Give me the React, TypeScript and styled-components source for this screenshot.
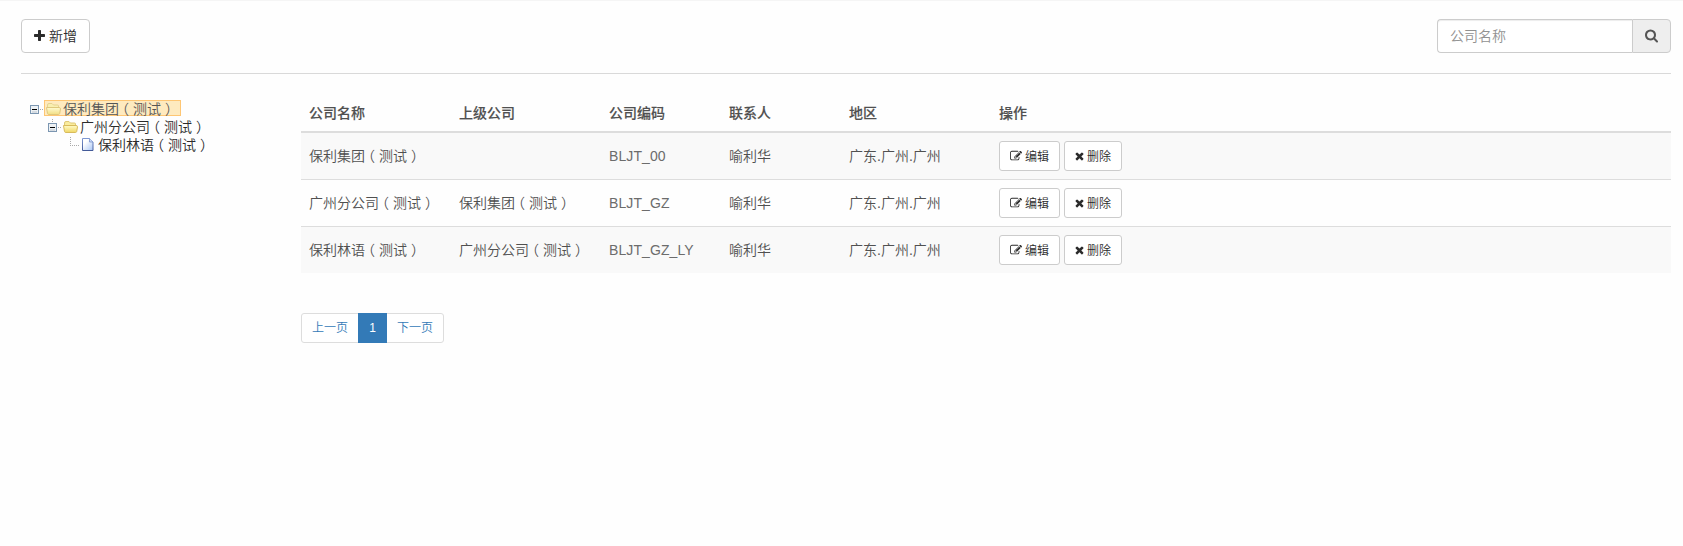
import React from 'react';
import styled, { createGlobalStyle, css } from 'styled-components';

const GlobalStyle = createGlobalStyle`
  * { box-sizing: border-box; }
  body {
    margin: 0;
    background: #fefefe;
    color: #505050;
    font: 350 14px/20px "Liberation Sans", "Noto Sans CJK SC", sans-serif;
  }
  button, input { font-family: inherit; font-weight: inherit; }
`;

const Page = styled.div`
  min-height: 546px;
  border-top: 1px solid #f5f5f5;
  padding: 18px 12px 0 21px;
`;

const Toolbar = styled.header`
  display: flex;
  justify-content: space-between;
  height: 55px;
  border-bottom: 1px solid #d9d9d9;
`;

const Button = styled.button<{ $small?: boolean }>`
  display: inline-flex;
  align-items: center;
  gap: ${p => (p.$small ? 3 : 4)}px;
  height: ${p => (p.$small ? 30 : 34)}px;
  padding: ${p => (p.$small ? '0 10px' : '0 12px')};
  border: 1px solid #ccc;
  border-radius: ${p => (p.$small ? 3 : 4)}px;
  background: #fff;
  color: #2b2b2b;
  font-size: ${p => (p.$small ? 12 : 14)}px;
  line-height: ${p => (p.$small ? 18 : 20)}px;
  white-space: nowrap;
`;

const SearchGroup = styled.div`
  display: flex;
  width: 234px;
  height: 34px;
`;

const SearchInput = styled.input`
  width: 195px;
  padding: 6px 12px;
  border: 1px solid #ccc;
  border-right: 0;
  border-radius: 4px 0 0 4px;
  background: #fff;
  box-shadow: inset 0 1px 1px rgba(0, 0, 0, 0.075);
  font-size: 14px;
  outline: none;
  &::placeholder { color: #919191; opacity: 1; }
`;

const SearchAddon = styled.span`
  display: flex;
  flex: 1;
  align-items: center;
  justify-content: center;
  border: 1px solid #ccc;
  border-radius: 0 4px 4px 0;
  background: #eee;
  color: #555;
`;

const Glyph = styled.svg`
  display: block;
  flex: none;
  fill: currentColor;
`;

const Body = styled.main`
  display: flex;
`;

const Tree = styled.nav`
  width: 280px;
  padding: 26px 0 0 5px;
  color: #2b2b2b;
`;

const TreeRow = styled.div<{ $level: number }>`
  display: flex;
  align-items: flex-start;
  height: 18px;
  padding-left: ${p => p.$level * 18}px;
`;

const TreeLink = styled.a<{ $selected?: boolean }>`
  display: flex;
  align-items: flex-start;
  gap: 2px;
  height: 18px;
  line-height: 18px;
  white-space: nowrap;
  ${p => p.$selected && css`
    width: 137px;
    height: 16px;
    line-height: 16px;
    border: 1px solid #ffb951;
    background: #ffe6b0;
    opacity: 0.8;
    & > svg { margin-top: -1px; }
  `}
`;

const Content = styled.section`
  flex: 1;
  padding-top: 20px;
`;

const Table = styled.table`
  width: 100%;
  table-layout: fixed;
  border-spacing: 0;
`;

const HeadCell = styled.th<{ $width?: number }>`
  width: ${p => (p.$width ? `${p.$width}px` : 'auto')};
  height: 39px;
  padding: 1px 8px 0;
  border-bottom: 2px solid #ddd;
  text-align: left;
  font-weight: 500;
  -webkit-text-stroke: 0.15px #505050;
`;

const Row = styled.tr`
  &:nth-child(odd) { background: #f9f9f9; }
  & + & > td { border-top: 1px solid #ddd; height: 47px; }
`;

const Cell = styled.td`
  height: 46px;
  padding: 0 8px;
  white-space: nowrap;
`;

const Code = styled.span`
  color: #6c6c6c;
  letter-spacing: 0.1px;
`;

const Actions = styled.div`
  display: flex;
  gap: 4px;
`;

const Paren = styled.span<{ $open?: boolean }>`
  display: inline-block;
  width: 14px;
  padding-left: ${p => (p.$open ? 3 : 4)}px;
  font-feature-settings: "halt";
`;

const Pager = styled.nav`
  display: flex;
  width: 143px;
  height: 30px;
  margin-top: 40px;
  border: 1px solid #ddd;
  border-radius: 3px;
  background: #fff;
`;

const PageLink = styled.a<{ $active?: boolean }>`
  display: flex;
  flex: ${p => (p.$active ? '0 0 29px' : 1)};
  align-items: center;
  justify-content: center;
  margin: ${p => (p.$active ? '-1px 0' : 0)};
  background: ${p => (p.$active ? '#337ab7' : 'transparent')};
  color: ${p => (p.$active ? '#fff' : '#337ab7')};
  font-size: 12px;
  line-height: 18px;
`;

const PLUS = 'M1600 736v192q0 40-28 68t-68 28h-416v416q0 40-28 68t-68 28h-192q-40 0-68-28t-28-68v-416h-416q-40 0-68-28t-28-68v-192q0-40 28-68t68-28h416v-416q0-40 28-68t68-28h192q40 0 68 28t28 68v416h416q40 0 68 28t28 68z';
const TIMES = 'M1490 1322q0 40-28 68l-136 136q-28 28-68 28t-68-28l-294-294-294 294q-28 28-68 28t-68-28l-136-136q-28-28-28-68t28-68l294-294-294-294q-28-28-28-68t28-68l136-136q28-28 68-28t68 28l294 294 294-294q28-28 68-28t68 28l136 136q28 28 28 68t-28 68l-294 294 294 294q28 28 28 68z';
const SEARCH = 'M1216 832q0-185-131.5-316.5t-316.5-131.5-316.5 131.5-131.5 316.5 131.5 316.5 316.5 131.5 316.5-131.5 131.5-316.5zm512 832q0 52-38 90t-90 38q-54 0-90-38l-343-342q-179 124-399 124-143 0-273.5-55.5t-225-150-150-225-55.5-273.5 55.5-273.5 150-225 225-150 273.5-55.5 273.5 55.5 225 150 150 225 55.5 273.5q0 220-124 399l343 343q37 37 37 90z';
const EDIT = 'M888 1184l116-116-152-152-116 116v56h96v96h56zm440-720q-16-16-33 1l-350 350q-17 17-1 33t33-1l350-350q17-17 1-33zm80 594v190q0 119-84.5 203.5t-203.5 84.5h-832q-119 0-203.5-84.5t-84.5-203.5v-832q0-119 84.5-203.5t203.5-84.5h832q63 0 117 25 15 7 18 23 3 17-9 29l-49 49q-14 14-32 8-23-6-45-6h-832q-66 0-113 47t-47 113v832q0 66 47 113t113 47h832q66 0 113-47t47-113v-126q0-13 9-22l64-64q15-15 35-7t20 29zm-96-738l288 288-672 672h-288v-288zm444 132l-92 92-288-288 92-92q28-28 68-28t68 28l152 152q28 28 28 68t-28 68z';

const PlusIcon = () => <Glyph width="11" height="14" viewBox="192 0 1408 1792"><path d={PLUS} /></Glyph>;
const TimesIcon = () => <Glyph width="9" height="12" viewBox="224 0 1344 1792"><path d={TIMES} /></Glyph>;
const SearchIcon = () => <Glyph width="13" height="14" viewBox="64 64 1664 1792"><path d={SEARCH} /></Glyph>;
const EditIcon = () => <Glyph width="12" height="12" viewBox="0 0 1792 1792"><path d={EDIT} /></Glyph>;

const ButtonText = styled.span`
  padding-top: 1px;
`;

type SwitchKind = 'root' | 'branch' | 'leaf';

const TreeSwitch = ({ kind }: { kind: SwitchKind }) => (
  <Glyph width="18" height="18" viewBox="0 0 18 18" shapeRendering="crispEdges">
    {kind !== 'root' && (
      <path d={kind === 'leaf' ? 'M8.5 1v9' : 'M8.5 1v4'} stroke="#aaa" strokeDasharray="1 1" />
    )}
    <path d={kind === 'leaf' ? 'M8 9.5h10' : 'M14 9.5h4'} stroke="#aaa" strokeDasharray="1 1" />
    {kind !== 'leaf' && (
      <>
        <rect x="4.5" y="5.5" width="8" height="8" fill="#edf1f4" stroke="#7b96b1" />
        <path d="M6 11h5v2h-5z" fill="#d5dbe1" />
        <path d="M6 9.5h5" stroke="#000" />
      </>
    )}
  </Glyph>
);

const FolderIcon = () => (
  <Glyph width="16" height="16" viewBox="0 0 16 16">
    <defs>
      <linearGradient id="folderFront" x1="0" y1="0" x2="0" y2="1">
        <stop offset="0" stopColor="#fffbc8" />
        <stop offset="1" stopColor="#f0d765" />
      </linearGradient>
    </defs>
    <path d="M2.500 9V5q0-1.500 1.500-1.500h3L8.500 5h4q1 0 1 1v3" fill="#f9ec9d" stroke="#dfc877" />
    <path d="M1.500 7.500h12.500q1.500 0 1.500 1.300l-.8 4.700q-.3 1-1.300 1H3.800q-1 0-1.300-1z" fill="url(#folderFront)" stroke="#d8bb5c" />
  </Glyph>
);

const PageIcon = () => (
  <Glyph width="16" height="16" viewBox="0 0 16 16">
    <defs>
      <linearGradient id="sheet" x1="0" y1="0" x2="1" y2="1">
        <stop offset="0.3" stopColor="#fff" />
        <stop offset="1" stopColor="#a9c6f5" />
      </linearGradient>
      <linearGradient id="sheetEdge" x1="0" y1="0" x2="0" y2="1">
        <stop offset="0" stopColor="#7d97d2" />
        <stop offset="1" stopColor="#435a98" />
      </linearGradient>
    </defs>
    <path d="M2.500 2.500h7l3.500 3.500v8.500h-10.500z" fill="url(#sheet)" stroke="url(#sheetEdge)" />
    <path d="M9.500 2.500v3.500h3.500" fill="#c9daf8" stroke="#6d87c4" strokeWidth=".7" />
  </Glyph>
);

const Name = ({ text }: { text: string }) => (
  <span>
    {text.split(/([（）])/).map((part, i) =>
      part === '（' || part === '）' ? <Paren key={i} $open={part === '（'}>{part}</Paren> : part,
    )}
  </span>
);

const columns = [
  { title: '公司名称', width: 150 },
  { title: '上级公司', width: 150 },
  { title: '公司编码', width: 120 },
  { title: '联系人', width: 120 },
  { title: '地区', width: 150 },
  { title: '操作' },
];

const companies = [
  { name: '保利集团（测试）', parent: '', code: 'BLJT_00' },
  { name: '广州分公司（测试）', parent: '保利集团（测试）', code: 'BLJT_GZ' },
  { name: '保利林语（测试）', parent: '广州分公司（测试）', code: 'BLJT_GZ_LY' },
];

const kinds: SwitchKind[] = ['root', 'branch', 'leaf'];

export default function App() {
  return (
    <>
      <GlobalStyle />
      <Page>
        <Toolbar>
          <Button><PlusIcon />新增</Button>
          <SearchGroup>
            <SearchInput placeholder="公司名称" />
            <SearchAddon><SearchIcon /></SearchAddon>
          </SearchGroup>
        </Toolbar>
        <Body>
          <Tree>
            {companies.map((c, level) => (
              <TreeRow key={c.code} $level={level}>
                <TreeSwitch kind={kinds[level]} />
                <TreeLink $selected={level === 0}>
                  {kinds[level] === 'leaf' ? <PageIcon /> : <FolderIcon />}
                  <Name text={c.name} />
                </TreeLink>
              </TreeRow>
            ))}
          </Tree>
          <Content>
            <Table>
              <thead>
                <tr>
                  {columns.map(c => <HeadCell key={c.title} $width={c.width}>{c.title}</HeadCell>)}
                </tr>
              </thead>
              <tbody>
                {companies.map(c => (
                  <Row key={c.code}>
                    <Cell><Name text={c.name} /></Cell>
                    <Cell><Name text={c.parent} /></Cell>
                    <Cell><Code>{c.code}</Code></Cell>
                    <Cell>喻利华</Cell>
                    <Cell>广东.广州.广州</Cell>
                    <Cell>
                      <Actions>
                        <Button $small><EditIcon /><ButtonText>编辑</ButtonText></Button>
                        <Button $small><TimesIcon /><ButtonText>删除</ButtonText></Button>
                      </Actions>
                    </Cell>
                  </Row>
                ))}
              </tbody>
            </Table>
            <Pager>
              <PageLink>上一页</PageLink>
              <PageLink $active>1</PageLink>
              <PageLink>下一页</PageLink>
            </Pager>
          </Content>
        </Body>
      </Page>
    </>
  );
}
